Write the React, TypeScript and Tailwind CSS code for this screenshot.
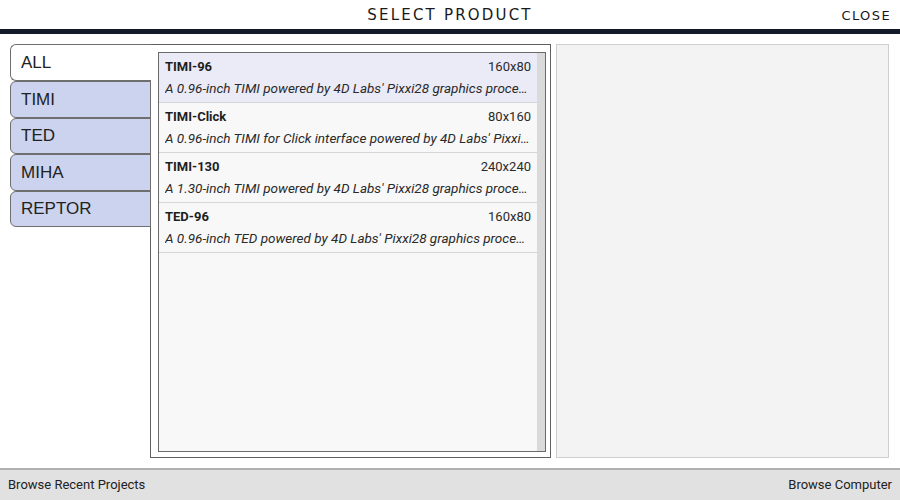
import React from 'react';

const tabs = ['ALL', 'TIMI', 'TED', 'MIHA', 'REPTOR'];

const products = [
  { name: 'TIMI-96', res: '160x80', desc: "A 0.96-inch TIMI powered by 4D Labs' Pixxi28 graphics processor" },
  { name: 'TIMI-Click', res: '80x160', desc: "A 0.96-inch TIMI for Click interface powered by 4D Labs' Pixxi28 graphics processor" },
  { name: 'TIMI-130', res: '240x240', desc: "A 1.30-inch TIMI powered by 4D Labs' Pixxi28 graphics processor" },
  { name: 'TED-96', res: '160x80', desc: "A 0.96-inch TED powered by 4D Labs' Pixxi28 graphics processor" },
];

export default function App() {
  return (
    <div className="w-[900px] h-[500px] bg-white flex flex-col overflow-hidden text-[#222]">
      {/* header */}
      <div className="h-[29px] relative flex items-center justify-center">
        <span className="text-[15px] tracking-[2.2px] font-[DejaVu_Sans,sans-serif] text-[#1a1a1a] mt-[2px]">
          SELECT PRODUCT
        </span>
        <span className="absolute right-[9px] top-[6px] text-[13px] tracking-[1.4px] font-[DejaVu_Sans,sans-serif] text-[#1a1a1a]">
          CLOSE
        </span>
      </div>
      <div className="h-[5px] bg-[#141b2b]" />

      {/* body */}
      <div className="flex-1 min-h-0 flex pt-[10px] pl-[10px] pr-[11px] pb-[10px]">
        {/* tabs */}
        <div className="w-[141px] shrink-0 mr-[-1px] relative z-10 flex flex-col font-['Liberation_Sans',sans-serif] text-[17px]">
          {tabs.map((t, i) =>
            i === 0 ? (
              <div
                key={t}
                className="h-[37px] bg-white border border-r-0 border-[#6f6f6f] rounded-l-[6px] pl-[10px] flex items-center"
              >
                {t}
              </div>
            ) : (
              <div
                key={t}
                className="h-[36.5px] bg-[#cbd3ee] border border-[#6f6f6f] rounded-l-[6px] pl-[10px] flex items-center"
              >
                {t}
              </div>
            )
          )}
        </div>

        {/* list frame */}
        <div className="w-[401px] shrink-0 border border-[#5f5f5f] pt-[7px] pl-[7px] pr-[4px] pb-[5px] flex">
          <div className="flex-1 min-w-0 border border-[#6a6a6a] bg-[#f8f8f8] flex font-[Roboto,sans-serif]">
            <div className="flex-1 min-w-0 flex flex-col">
              {products.map((p, i) => (
                <div
                  key={p.name}
                  className={`h-[50px] border-b border-[#d6d6d6] px-[6px] pt-[5px] ${i === 0 ? 'bg-[#eaebf7]' : ''}`}
                >
                  <div className="flex justify-between text-[13px] leading-[17px]">
                    <span className="font-bold text-[#1e1e1e]">{p.name}</span>
                    <span className="text-[#2a2a2a]">{p.res}</span>
                  </div>
                  <div className="text-[13.5px] italic leading-[18px] mt-[4px] truncate text-[#2a2a2a]">
                    {p.desc}
                  </div>
                </div>
              ))}
            </div>
            <div className="w-[8px] shrink-0 bg-[#dadada]" />
          </div>
        </div>

        {/* preview */}
        <div className="flex-1 ml-[5px] bg-[#f3f3f3] border border-[#cfcfcf]" />
      </div>

      {/* footer */}
      <div className="h-[32px] bg-[#e1e1e1] border-t-2 border-[#b0b0b0] flex items-center justify-between px-[8px] font-[Roboto,sans-serif] text-[13px] text-[#222]">
        <span>Browse Recent Projects</span>
        <span>Browse Computer</span>
      </div>
    </div>
  );
}
